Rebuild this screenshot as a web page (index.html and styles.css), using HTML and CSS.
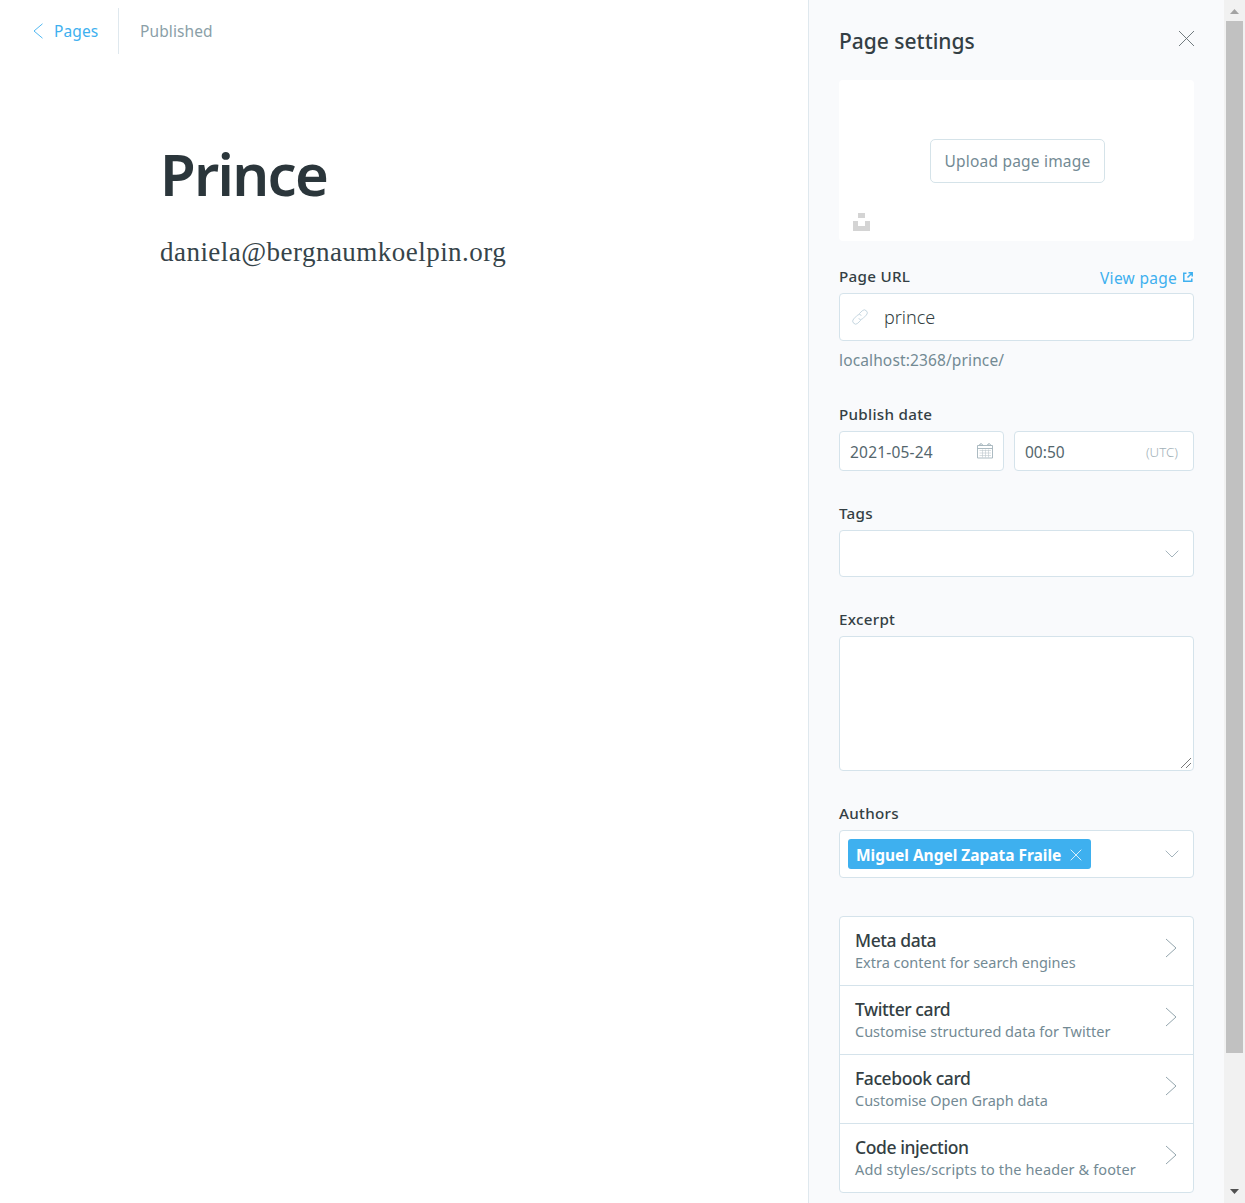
FILE: index.html
```html
<!DOCTYPE html>
<html lang="en">
<head>
<meta charset="utf-8">
<title>Prince</title>
<link rel="stylesheet" href="styles.css">
</head>
<body>
<div class="app">
  <main class="editor">
    <header class="editor-header">
      <a class="back"><svg width="10" height="16" viewBox="0 0 10 16"><path d="M9.500.8 1 8l8.500 7.200"/></svg><span>Pages</span></a>
      <span class="status">Published</span>
    </header>
    <article class="post">
      <h1>Prince</h1>
      <p>daniela@bergnaumkoelpin.org</p>
    </article>
  </main>
  <aside class="settings">
    <div class="settings-header">
      <h2>Page settings</h2>
      <svg class="close" width="17" height="17" viewBox="0 0 17 17"><path d="M1 1l15 15M16 1 1 16"/></svg>
    </div>
    <div class="uploader">
      <button class="upload">Upload page image</button>
      <svg class="unsplash" width="17" height="18" viewBox="0 0 17 18"><path d="M5 0h7v5H5zM0 8h5v5h7V8h5v10H0z"/></svg>
    </div>
    <section class="field url">
      <div class="label-row"><label>Page URL</label>
        <a class="view"><span>View page</span><svg width="10" height="10" viewBox="0 0 10 10"><path d="M3.500 1.200H.8v8h8V6.500M5.500.8h3.700v3.700M8.800 1.200 4.500 5.500"/></svg></a></div>
      <div class="box url-box">
        <svg width="18" height="18" viewBox="0 0 18 18"><path d="M8.200 5.800l3-3a2.950 2.950 0 0 1 4.200 4.200l-3.600 3.600a2.950 2.950 0 0 1-4.200 0M9.800 12.200l-3 3a2.950 2.950 0 0 1-4.200-4.200l3.600-3.600a2.950 2.950 0 0 1 4.200 0"/></svg>
        <span>prince</span></div>
      <p class="hint">localhost:2368/prince/</p>
    </section>
    <section class="field">
      <label>Publish date</label>
      <div class="date-row">
        <div class="box date"><span>2021-05-24</span>
          <svg width="16" height="16" viewBox="0 0 16 16"><path class="frame" d="M.5 2.500h15v12.500H.5zM.5 5.500h15M2.500 1.500q1.500-2 3 0t-3 0M10.500 1.500q1.500-2 3 0t-3 0"/><path d="M2.500 7.500h11.500M2.500 10h11.500M2.500 12.500h11.500M5.500 6.500v8M8.500 6.500v8M11.500 6.500v8"/></svg></div>
        <div class="box time"><span>00:50</span><small>(UTC)</small></div>
      </div>
    </section>
    <section class="field">
      <label>Tags</label>
      <div class="box select tags"><svg class="down" width="14" height="8" viewBox="0 0 14 8"><path d="M.7.700 7 7 13.300.7"/></svg></div>
    </section>
    <section class="field">
      <label>Excerpt</label>
      <div class="excerpt-wrap">
        <textarea class="box excerpt"></textarea>
        <svg class="grip" width="12" height="12" viewBox="0 0 12 12"><path d="M1 11 11 1M6 11l5-5"/></svg>
      </div>
    </section>
    <section class="field">
      <label>Authors</label>
      <div class="box select authors">
        <div class="token"><span>Miguel Angel Zapata Fraile</span><svg width="12" height="12" viewBox="0 0 12 12"><path d="M.7.700l10.600 10.600M11.300.7.700 11.300"/></svg></div>
        <svg class="down" width="14" height="8" viewBox="0 0 14 8"><path d="M.7.700 7 7 13.300.7"/></svg></div>
    </section>
    <nav class="box menu">
      <div class="item"><div><b>Meta data</b><i>Extra content for search engines</i></div><svg width="12" height="20" viewBox="0 0 12 20"><path d="M1 1l10 9-10 9"/></svg></div>
      <div class="item"><div><b>Twitter card</b><i>Customise structured data for Twitter</i></div><svg width="12" height="20" viewBox="0 0 12 20"><path d="M1 1l10 9-10 9"/></svg></div>
      <div class="item"><div><b>Facebook card</b><i>Customise Open Graph data</i></div><svg width="12" height="20" viewBox="0 0 12 20"><path d="M1 1l10 9-10 9"/></svg></div>
      <div class="item"><div><b>Code injection</b><i>Add styles/scripts to the header &amp; footer</i></div><svg width="12" height="20" viewBox="0 0 12 20"><path d="M1 1l10 9-10 9"/></svg></div>
    </nav>
  </aside>
  <div class="scrollbar"><svg width="9" height="5" viewBox="0 0 9 5"><path fill="#a3a3a3" d="M0 5 4.500 0 9 5z"/></svg><div class="thumb"></div><svg width="9" height="5" viewBox="0 0 9 5"><path fill="#505050" d="M0 0h9L4.500 5z"/></svg></div>
</div>
</body>
</html>
```
FILE: styles.css
```css
* { box-sizing: border-box; }
body { margin: 0; background: #fff; color: #343f44; font-family: "Noto Sans", "Open Sans", sans-serif; font-size: 15.500px; }
h1, h2, p { margin: 0; }
svg { fill: none; display: block; flex: none; }
.app { display: flex; height: 1203px; overflow: hidden; }
.editor { width: 808px; flex: none; }
.editor-header { display: flex; padding: 8px 0 0 33px; height: 62px; letter-spacing: .1px; line-height: 46px; }
.back { display: flex; align-items: center; gap: 11px; width: 86px; height: 46px; color: #3eb0ef; border-right: 1px solid #dfe8ee; }
.back svg { stroke: #3eb0ef; stroke-width: .9; }
.status { padding-left: 21px; color: #8b9fa8; }
.post { padding: 73px 160px 0; }
.post h1 { font-size: 58px; line-height: 78px; font-weight: 600; letter-spacing: -1.700px; color: #2b363b; }
.post p { margin-top: 20px; font: 27px/38px "Liberation Serif", serif; letter-spacing: .47px; color: #36444a; }
.settings { width: 416px; flex: none; background: #f9fafc; border-left: 1px solid #dfe8ee; padding: 0 30px; }
.settings-header { display: flex; height: 80px; justify-content: space-between; padding-top: 21px; }
.settings-header h2 { font-size: 21px; line-height: 40px; font-weight: 500; color: #343f44; }
.close { margin: 9px -1px 0 0; stroke: #626c70; stroke-width: .9; }
.uploader { height: 161px; background: #fff; border-radius: 4px; display: grid; justify-items: center; align-content: start; padding-top: 59px; margin-bottom: 26px; }
.upload { width: 175px; height: 44px; padding: 0; margin-left: 2px; border: 1px solid #d5e3e9; border-radius: 5px; background: #fff; font: 15.500px "Noto Sans", sans-serif; letter-spacing: .2px; color: #738a94; }
.unsplash { justify-self: start; margin: 30px 0 0 14px; fill: #d4d4d4; }
.field label { display: block; height: 26px; line-height: 18px; font-weight: 500; font-size: 15.200px; letter-spacing: .28px; }
.label-row { display: flex; justify-content: space-between; }
.view { display: flex; gap: 6px; height: 21px; line-height: 22px; letter-spacing: .28px; color: #3eb0ef; }
.view svg { margin: 5px 1px 0 0; stroke: #3eb0ef; stroke-width: 1.500; }
.box { background: #fff; border: 1px solid #d5e3eb; border-radius: 4px; }
.url { height: 138px; }
.url-box { display: flex; align-items: center; height: 48px; padding-left: 11px; gap: 15px; font-size: 18px; font-weight: 300; }
.url-box svg { stroke: #c6d7e1; }
.hint { line-height: 21px; padding-top: 9px; letter-spacing: .13px; color: #738a94; }
.date-row { display: flex; gap: 10px; height: 73px; }
.date, .time { display: flex; height: 40px; justify-content: space-between; align-items: center; padding: 0 10px; color: #54666d; }
.date span, .time span { letter-spacing: .2px; padding-top: 1px; }
.time span { letter-spacing: 0; }
.date { width: 165px; }
.date svg { stroke: #bdc8cd; stroke-width: .6; }
.date .frame { stroke: #a3b3bb; stroke-width: .9; }
.time { width: 180px; padding-right: 15px; }
.time small { color: #a2b1b8; font-size: 13.300px; font-weight: 300; padding-top: 1px; }
.select { display: flex; align-items: center; justify-content: flex-end; padding-right: 14px; }
.down { stroke: #a5b5bd; }
.tags { height: 47px; margin-bottom: 33px; }
.excerpt-wrap { position: relative; height: 168px; }
.excerpt { display: block; width: 355px; height: 135px; resize: none; }
.grip { position: absolute; right: 2px; top: 121px; stroke: #555; stroke-width: .8; }
.authors { height: 48px; padding-left: 8px; justify-content: space-between; margin-bottom: 38px; }
.token { display: flex; align-items: center; justify-content: space-between; width: 243px; height: 30px; padding: 2px 9px 0 8px; background: #3eb0ef; border-radius: 3px; color: #fff; font-weight: 700; letter-spacing: -.02px; }
.token svg { stroke: #d7effc; }
.menu { height: 277px; }
.item { display: flex; justify-content: space-between; height: 69px; padding: 12px 16px 0 15px; border-bottom: 1px solid #d5e3eb; }
.item:last-child { border: 0; }
.item svg { margin-top: 9px; stroke: #93a5ad; }
.item b, .item i { display: block; font-style: normal; white-space: nowrap; }
.item b { font-size: 17.500px; height: 24px; line-height: 22px; font-weight: 500; letter-spacing: -.42px; }
.item i { font-size: 14.500px; line-height: 18px; color: #738a94; }
.item:last-child i { letter-spacing: .13px; }
.scrollbar { width: 21px; background: #f1f1f1; display: flex; flex-direction: column; align-items: center; padding-top: 9px; }
.thumb { width: 17px; height: 1032px; margin: 7px 0 136px; background: #c1c1c1; }
```
